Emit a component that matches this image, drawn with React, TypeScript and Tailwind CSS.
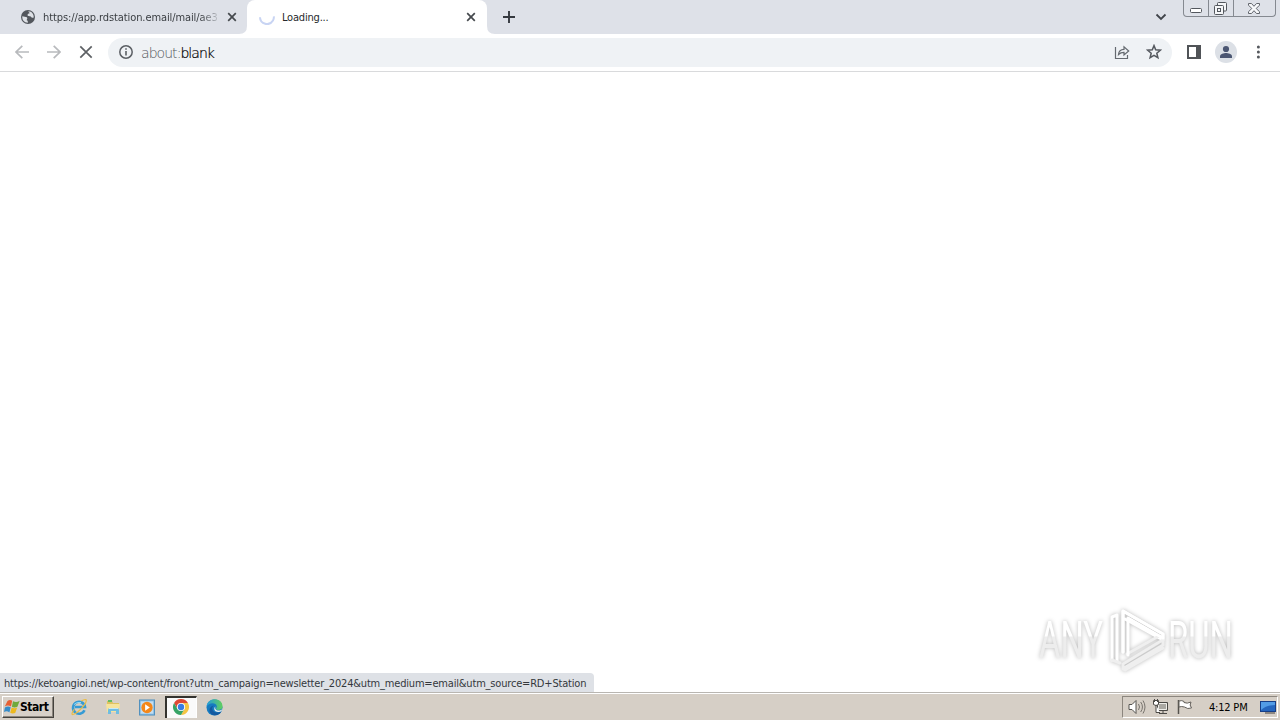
import type { ReactNode } from "react";

const uiFont = "font-['DejaVu_Sans_Condensed','DejaVu_Sans',sans-serif] [font-stretch:condensed]";

function CloseIcon() {
  return (
    <svg width="10" height="10" viewBox="0 0 10 10" stroke="#45494d" strokeWidth="1.7">
      <path d="M1.2 1.2 8.8 8.8M8.8 1.2 1.2 8.8" />
    </svg>
  );
}

function GlobeIcon() {
  return (
    <svg width="16" height="16" viewBox="0 0 16 16">
      <circle cx="8" cy="8" r="7" fill="#53575d" />
      <path d="M2.300 7.300 6 8c1.500.3 1.500 1.500 1 2.200-.6.700-.2 1.300.7 1.500l.2 2C4 13.700 2 11 2.300 7.300ZM8.300 2.300c2 0 3.400.9 4.300 2.100.9 1.200 1.200 2.600 1.100 4-1.200.8-2.200.3-2.800-.7-.5-.8-1.500-.4-2.400-.6-1.100-.2-1.200-1.200-.7-1.800.6-.8 1.600-.3 1.700-1.200.1-.9-1.100-.7-1.200-1.800Z" fill="#dee1e6" />
    </svg>
  );
}

function TabStrip() {
  return (
    <header className="flex h-[34px] bg-[#dee1e8]">
      <div className="flex w-[247px] items-center pl-5">
        <GlobeIcon />
        <span className={`${uiFont} ml-[7px] mt-px w-[178px] whitespace-nowrap bg-gradient-to-r from-[#34383c] from-88% to-[#dee1e8] bg-clip-text text-[11px] leading-4 tracking-[-0.1px] text-transparent`}>
          https://app.rdstation.email/mail/ae3
        </span>
        <span className="ml-[6px]"><CloseIcon /></span>
      </div>
      <div className="relative flex w-[240px] items-center rounded-t-lg bg-white pl-3">
        <svg className="absolute -left-2 bottom-0" width="8" height="8"><path d="M8 0V8H0Q8 8 8 0" fill="#fff" /></svg>
        <svg className="absolute -right-2 bottom-0" width="8" height="8"><path d="M0 0V8H8Q0 8 0 0" fill="#fff" /></svg>
        <svg width="16" height="16" viewBox="0 0 16 16" fill="none" stroke="#c8d4f3" strokeWidth="2">
          <path d="M1 8.200A7 7 0 0 0 14 11.600Q15 9.900 14.900 7.400" />
        </svg>
        <span className={`${uiFont} ml-[7px] mt-px w-[184px] whitespace-nowrap text-[11px] leading-4 tracking-[-0.2px] text-[#26292c]`}>Loading...</span>
        <CloseIcon />
      </div>
      <svg className="ml-4 mt-[11px]" width="12" height="12" viewBox="0 0 12 12" stroke="#35393f" strokeWidth="1.900"><path d="M6 0v12M0 6h12" /></svg>
      <svg className="ml-auto mt-[13px]" width="12" height="8" viewBox="0 0 12 8" fill="none" stroke="#40444a" strokeWidth="1.800"><path d="m1.500 1.500 4.500 4.500 4.500-4.500" /></svg>
      <div className="ml-4 mr-1 flex h-[17px] w-[93px] rounded-b-[4px] border border-t-0 border-[#858990]">
        <div className="flex w-[25px] items-end justify-center border-r border-[#858990] pb-[3px]">
          <svg width="12" height="5" viewBox="0 0 12 5"><rect x=".5" y=".5" width="11" height="4" rx="1" fill="#fff" stroke="#53575d" /></svg>
        </div>
        <div className="flex w-[25px] justify-center border-r border-[#858990] pr-[2px] pt-[2px]">
          <svg width="13" height="13" viewBox="0 0 13 13" fill="#f5f6f8" stroke="#53575d"><rect x="3.500" y=".5" width="9" height="8.500" rx="1" /><rect x=".5" y="3.500" width="9" height="9" rx="1" /><rect x="3.500" y="6.500" width="3" height="3" /></svg>
        </div>
        <div className="flex flex-1 justify-center pr-px pt-[3px]">
          <svg width="12" height="11" viewBox="0 0 12 11"><path d="M.5.5h3L6 3.300 8.500.5h3v1.700L8.200 5.500l3.300 3.200v1.800h-3L6 7.700l-2.500 2.800h-3V8.700l3.300-3.200L.5 2.200Z" fill="#f7f8fa" stroke="#62666d" /></svg>
        </div>
      </div>
    </header>
  );
}

function Toolbar() {
  return (
    <div className="flex h-[38px] items-center border-b border-[#d9dadc] bg-white pb-px">
      <svg className="ml-[15px]" width="14" height="14" viewBox="0 0 14 14" fill="none" stroke="#b8babd" strokeWidth="1.700"><path d="M14 7H1M7.300.8 1 7l6.300 6.200" /></svg>
      <svg className="ml-[18px]" width="14" height="14" viewBox="0 0 14 14" fill="none" stroke="#b8babd" strokeWidth="1.700"><path d="M0 7h13M6.700.8 13 7l-6.300 6.200" /></svg>
      <svg className="ml-[18px]" width="14" height="14" viewBox="0 0 14 14" stroke="#5d6064" strokeWidth="1.700"><path d="m1.300 1.300 11.400 11.400m0-11.400L1.300 12.700" /></svg>
      <div className="ml-[15px] flex h-[29px] w-[1064px] items-center rounded-full bg-[#eff2f5] pl-[11px]">
        <svg width="14" height="14" viewBox="0 0 14 14"><circle cx="7" cy="7" r="6.200" fill="none" stroke="#5b5f64" strokeWidth="1.500" /><path d="M7 6v4.600M7 3.200v1.600" stroke="#5b5f64" strokeWidth="1.600" /></svg>
        <span className="ml-2 mt-px whitespace-nowrap font-['DejaVu_Sans','DejaVu_Sans_Light',sans-serif] text-[14px] font-extralight leading-5 tracking-[-0.95px] text-[#54585d]">
          about:<span className="text-black [-webkit-text-stroke:0.2px_#000]">blank</span>
        </span>
        <svg className="ml-auto mr-4" width="16" height="16" viewBox="0 0 16 16" fill="none" stroke="#656a70" strokeWidth="1.200"><path d="M1.500 3v11.500h12V11M4.500 10.500c.3-3.500 2-5 5.500-5.100V2.800l4.700 4.200L10 11V8.300c-2.500 0-4 .6-5.500 2.200Z" /></svg>
        <svg className="mr-[10px]" width="16" height="16" viewBox="0 0 16 16" fill="none" stroke="#55595f" strokeWidth="1.500"><path d="m8 1.600 1.700 4.200 4.600.4-3.500 3 1.100 4.500L8 11.300l-3.900 2.400 1.100-4.500-3.500-3 4.600-.4Z" /></svg>
      </div>
      <svg className="ml-[15px]" width="14" height="14" viewBox="0 0 14 14"><path d="M0 0h14v14H0ZM2 2v10h7V2Z" fill="#505357" fillRule="evenodd" /></svg>
      <svg className="ml-[14px]" width="22" height="22" viewBox="0 0 22 22"><circle cx="11" cy="11" r="11" fill="#dce0e6" /><circle cx="11" cy="8" r="3.100" fill="#4b5672" /><path d="M5 17v-1.700c0-2.200 4-3.200 6-3.200s6 1 6 3.200V17Z" fill="#4b5672" /></svg>
      <svg className="ml-[19px]" width="4" height="14" viewBox="0 0 4 14" fill="#55585d"><circle cx="2.400" cy="2" r="1.500" /><circle cx="2.400" cy="7" r="1.500" /><circle cx="2.400" cy="12" r="1.500" /></svg>
    </div>
  );
}

function Watermark() {
  return (
    <svg className="absolute bottom-[17px] right-[26px] overflow-visible drop-shadow-[0_0_2px_#b8b8b8]" width="230" height="72" viewBox="0 0 230 72" aria-label="ANY RUN">
      <defs>
        <linearGradient id="silver" gradientUnits="userSpaceOnUse" x1="0" y1="12" x2="0" y2="55">
          <stop offset=".48" stopColor="#fff" /><stop offset=".52" stopColor="#ededed" />
        </linearGradient>
      </defs>
      <g fontFamily="Roboto, 'Liberation Sans', sans-serif" fontSize="51" fill="url(#silver)">
        <text x="15" y="55" textLength="64" lengthAdjust="spacingAndGlyphs">ANY</text>
        <text x="144" y="55" textLength="65" lengthAdjust="spacingAndGlyphs">RUN</text>
      </g>
      <g fill="none" strokeWidth="3" strokeLinejoin="round" strokeLinecap="round">
        <path d="M88 57V14l5-2v46M99 49V8l40 23v6L101 16" stroke="#fff" />
        <path d="m88 57 8 3M103 51l32-18M99 61l38-23M100 65l39-23v-8M99 61v5l2 1 38-22" stroke="#efefef" />
        <path d="M99 49V8l40 23v4L104 15v37" stroke="#fff" />
      </g>
    </svg>
  );
}

function TaskSlot({ children, active = false }: { children: ReactNode; active?: boolean }) {
  return <div className={active ? "flex h-[22px] w-8 items-center justify-center border-l-2 border-t-2 border-[#34332f] border-r border-r-white bg-[#fafafa] pb-[2px] pr-px" : "flex h-[22px] w-[34px] items-center justify-center"}>{children}</div>;
}

function Taskbar() {
  return (
    <footer className="flex h-7 items-center border-t border-[#b9b6b1] bg-[#d6cfc6] pt-px shadow-[inset_0_1px_0_#fff]">
      <button className="ml-[2px] flex h-[22px] w-[52px] items-center border border-l-white border-t-white border-b-[#45423d] border-r-[#45423d] bg-[#d7d0c8] pl-px shadow-[inset_-1px_-1px_0_#8b857d]">
        <svg width="16" height="16" viewBox="0 0 16 16">
          <path d="M3.500 2Q6 .2 8.200 1.800L7 7.500Q4 5.500.8 7.400Z" fill="#e66034" /><path d="M9 2.300q3.500 1.600 6.700-.5l-2.300 6q-3 1.500-5.500-.1Z" fill="#70a93b" />
          <path d="M.9 8.500q3-2 5.800-.2L5.400 13.500Q3 11.500 0 13Z" fill="#368cc9" /><path d="M7.700 8.500q3 1.500 5.500.1l-2 5.500q-3 1-5-.4Z" fill="#edb91f" />
        </svg>
        <span className={`${uiFont} text-[12px] font-bold leading-4 tracking-[-0.45px] text-black`}>Start</span>
      </button>
      <nav className="ml-2 flex items-center">
        <TaskSlot>
          <svg width="18" height="18" viewBox="0 0 18 18" fill="none"><path d="M14.500 12.300A6 6 0 1 1 15 9H5" stroke="#359bd5" strokeWidth="2.600" /><path d="M4.200 11.200Q.5 17 3 16.500c5-1 13.600-11 13.300-14.300C16.100.8 13 2 11.300 3.100" stroke="#ebbd45" strokeWidth="1.200" /><path d="M4 6.500q3-3 7-2" stroke="#90d9f5" /></svg>
        </TaskSlot>
        <TaskSlot>
          <svg width="17" height="16" viewBox="0 0 17 16"><path d="M2 2h5l1 2h6v8H2Z" fill="#dec35f" /><path d="M3 1h4v2H3Z" fill="#65bc61" /><path d="M1 5h14l-1 8H2Z" fill="#f6e49c" /><path d="M3 15v-4q0-2 2-2h7q2 0 2 2v4h-3v-3H6v3Z" fill="#70bde1" /><path d="M4 9.500h9" stroke="#c5eafa" /></svg>
        </TaskSlot>
        <TaskSlot>
          <svg width="16" height="17" viewBox="0 0 17 17"><rect x=".5" y=".5" width="16" height="16" fill="#8cbfe4" stroke="#4d8ebd" /><path d="M2 2h13v13H2Z" fill="#c5def0" /><circle cx="8.500" cy="8.500" r="6" fill="#f48719" /><path d="m6.500 5 5 3.500-5 3.500Z" fill="#fff" /></svg>
        </TaskSlot>
        <div className="ml-px"><TaskSlot active>
          <svg width="16" height="16" viewBox="0 0 16 16"><path d="M1.070 4A8 8 0 0 1 14.930 4H8L4.540 10Z" fill="#df4935" /><path d="M14.930 4A8 8 0 0 1 8 16l3.460-6L8 4Z" fill="#f5c443" /><path d="M8 16A8 8 0 0 1 1.070 4l3.470 6h6.920Z" fill="#36a365" /><circle cx="8" cy="8" r="4.100" fill="#fff" /><circle cx="8" cy="8" r="3.200" fill="#397ce4" /></svg>
        </TaskSlot></div>
        <TaskSlot>
          <svg width="17" height="17" viewBox="0 0 17 17"><defs><linearGradient id="wave"><stop stopColor="#249bdc" /><stop offset="1" stopColor="#60cf5e" /></linearGradient></defs><circle cx="8.500" cy="8.500" r="8" fill="#167bc0" /><path d="M.5 8C1-2.500 16.500-2 16.500 7.500c0 4.500-6.500 4-6.500 2.300 0-.8 1-1 .8-2.600C10 3 2.500 3.500.5 8Z" fill="url(#wave)" /><path d="M8 6.500c-3.500 2-1.500 7 3 7 2 0 3.800-.8 4.500-1.300-2 4.500-7.500 5.200-10.500 2.500-3-3-1.500-7.500 3-8.200Z" fill="#1459a0" /><path d="M9.500 7.500c-1 2 .5 4 3 4 1.600 0 2.600-.5 3.500-1l-.5 1.800q-2 1-4.500.5c-3-.5-3.500-4-1.500-5.300Z" fill="#e7eeee" /></svg>
        </TaskSlot>
      </nav>
      <div className="ml-auto mr-[2px] flex h-[22px] w-[156px] items-center border border-b-white border-l-[#8c867e] border-r-white border-t-[#8c867e] pl-[5px]">
        <svg width="18" height="16" viewBox="0 0 18 16" fill="none"><path d="M1 5.500h3l4-4v13l-4-4H1Z" fill="#fff" stroke="#55534f" /><path d="M10.500 5q2 3 0 6M12.700 3q3.500 5 0 10M15 1.500q4 6.500 0 13" stroke="#77736d" /></svg>
        <svg className="ml-[6px]" width="17" height="16" viewBox="0 0 17 16"><path d="M5.500 3.500h10v8h-10Z" fill="#aaa8a2" stroke="#4b4945" /><path d="M6.500 4.500h8v6h-8Z" fill="none" stroke="#efeee9" /><path d="M7 14.500h8M11 12v2" stroke="#4b4945" /><path d="M1.500 1.500h5v4q-2.500 2-5 0ZM2.500 0v3M5.500 0v3M4 6v7.500h4" fill="#fff" stroke="#4b4945" /></svg>
        <svg className="ml-[7px]" width="17" height="16" viewBox="0 0 17 16"><path d="M2.500 1v14" stroke="#55524d" strokeWidth="1.500" /><path d="M3 2q3-1 5 .5v1q3 1.500 7-.5-2 3 .5 6-4 1.500-7-1-3-1-5.500 0Z" fill="#fff" stroke="#64605b" /></svg>
        <span className={`${uiFont} ml-4 mt-px whitespace-nowrap text-[11px] leading-4 tracking-[-0.2px] text-black`}>4:12 PM</span>
        <svg className="ml-auto mr-px mt-px" width="16" height="14" viewBox="0 0 16 14"><rect x=".5" y=".5" width="15" height="10" fill="#2566be" stroke="#163e87" /><path d="M1 1h14v3Q6 4 1 9Z" fill="#529ce6" /><path d="M5 12h10" stroke="#76716b" strokeWidth="1.500" /></svg>
      </div>
    </footer>
  );
}

export default function App() {
  return (
    <div className="flex h-[720px] w-[1280px] flex-col overflow-hidden bg-white">
      <TabStrip />
      <Toolbar />
      <main className="relative flex flex-1 items-end bg-white">
        <div className="flex h-[19px] w-[594px] items-center rounded-tr-[4px] bg-[#dee1e6] pl-1 pt-[2px]">
          <span className={`${uiFont} whitespace-nowrap text-[11px] leading-4 tracking-[-0.187px] text-[#34383c]`}>https://ketoangioi.net/wp-content/front?utm_campaign=newsletter_2024&amp;utm_medium=email&amp;utm_source=RD+Station</span>
        </div>
        <Watermark />
      </main>
      <Taskbar />
    </div>
  );
}
